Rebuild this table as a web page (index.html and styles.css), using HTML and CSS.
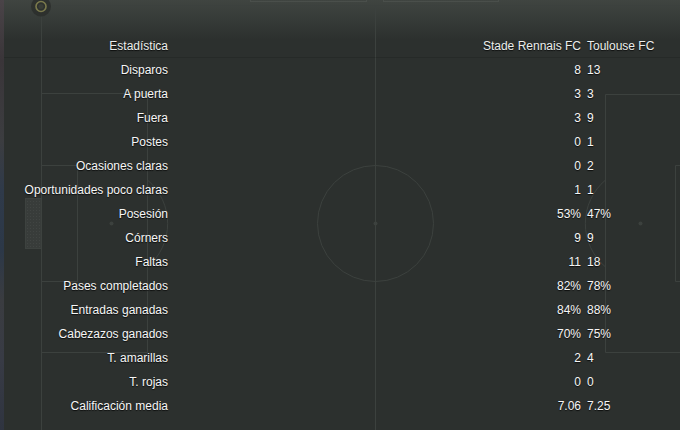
FILE: index.html
```html
<!DOCTYPE html>
<html lang="es">
<head>
<meta charset="utf-8">
<title>Estadísticas</title>
<link rel="stylesheet" href="styles.css">
</head>
<body>
<div class="screen">
  <div class="edge"></div>
  <svg class="pitch" viewBox="0 0 680 430" width="680" height="430" aria-hidden="true">
    <defs>
      <linearGradient id="topfade" x1="0" y1="0" x2="0" y2="1">
        <stop offset="0" stop-color="#404541"/>
        <stop offset="1" stop-color="#2c302e"/>
      </linearGradient>
      <pattern id="net" width="3" height="3" patternUnits="userSpaceOnUse">
        <rect width="3" height="3" fill="#383c3a"/>
        <rect width="1" height="1" fill="#414543"/>
      </pattern>
    </defs>
    <rect x="0" y="0" width="680" height="40" fill="url(#topfade)"/>
    <g fill="none" stroke="#4a4f4b" stroke-width="1">
      <rect x="250.5" y="-10" width="116" height="11.5"/>
      <rect x="383.5" y="-10" width="115" height="11.5"/>
    </g>
    <g fill="none" stroke="#3c413e" stroke-width="1">
      <path d="M52 5.5 H680"/>
      <path d="M41.5 16 V430"/>
      <path d="M375.5 5 V430"/>
      <circle cx="375.5" cy="223.5" r="58"/>
      <path d="M41.5 93.5 H147.5 V352.5 H41.5"/>
      <path d="M41.5 165.5 H77.5 V281.5 H41.5"/>
      <path d="M147.5 180 A57 57 0 0 1 147.5 267"/>
      <path d="M680 94.5 H605.5 V352.5 H680"/>
      <path d="M680 165.5 H675.5 V281.5 H680"/>
      <path d="M605.5 180 A57 57 0 0 0 605.5 267"/>
    </g>
    <g fill="#3c413e">
      <circle cx="375.5" cy="223.5" r="2"/>
      <circle cx="111.5" cy="223.5" r="2"/>
      <circle cx="640.5" cy="223.5" r="2"/>
    </g>
    <rect x="25.5" y="198.5" width="16" height="50" fill="url(#net)" stroke="#3d423f"/>
    <circle cx="41" cy="6.5" r="10" fill="#2a2d2b" opacity="0.8"/>
    <circle cx="41" cy="6.5" r="5" fill="none" stroke="#7b7a4c" stroke-width="1.6"/>
    <circle cx="41" cy="6.5" r="2.5" fill="#3a3d36"/>
  </svg>

  <div class="stats">
    <div class="row head">
      <span class="label">Estadística</span><span></span>
      <span class="home">Stade Rennais FC</span><span class="away">Toulouse FC</span>
    </div>
    <div class="row"><span class="label">Disparos</span><span></span><span class="home">8</span><span class="away">13</span></div>
    <div class="row"><span class="label">A puerta</span><span></span><span class="home">3</span><span class="away">3</span></div>
    <div class="row"><span class="label">Fuera</span><span></span><span class="home">3</span><span class="away">9</span></div>
    <div class="row"><span class="label">Postes</span><span></span><span class="home">0</span><span class="away">1</span></div>
    <div class="row"><span class="label">Ocasiones claras</span><span></span><span class="home">0</span><span class="away">2</span></div>
    <div class="row"><span class="label">Oportunidades poco claras</span><span></span><span class="home">1</span><span class="away">1</span></div>
    <div class="row"><span class="label">Posesión</span><span></span><span class="home">53%</span><span class="away">47%</span></div>
    <div class="row"><span class="label">Córners</span><span></span><span class="home">9</span><span class="away">9</span></div>
    <div class="row"><span class="label">Faltas</span><span></span><span class="home">11</span><span class="away">18</span></div>
    <div class="row"><span class="label">Pases completados</span><span></span><span class="home">82%</span><span class="away">78%</span></div>
    <div class="row"><span class="label">Entradas ganadas</span><span></span><span class="home">84%</span><span class="away">88%</span></div>
    <div class="row"><span class="label">Cabezazos ganados</span><span></span><span class="home">70%</span><span class="away">75%</span></div>
    <div class="row"><span class="label">T. amarillas</span><span></span><span class="home">2</span><span class="away">4</span></div>
    <div class="row"><span class="label">T. rojas</span><span></span><span class="home">0</span><span class="away">0</span></div>
    <div class="row"><span class="label">Calificación media</span><span></span><span class="home">7.06</span><span class="away">7.25</span></div>
  </div>
</div>
</body>
</html>
```

FILE: styles.css
```css
* { box-sizing: border-box; }

html, body {
  margin: 0;
  padding: 0;
  background: #2c302e;
}

.screen {
  position: relative;
  width: 680px;
  height: 430px;
  overflow: hidden;
  background: #2c302e;
  font-family: "Liberation Sans", Arial, sans-serif;
  font-size: 12px;
  color: #f6f6f6;
}

.pitch {
  position: absolute;
  left: 0;
  top: 0;
}

.edge {
  position: absolute;
  left: 0;
  top: 0;
  width: 4px;
  height: 430px;
  z-index: 1;
  background: linear-gradient(to bottom,
    #4a4448 0, #3a3539 60px, #3c3d40 140px, #2f3a4a 190px,
    #2c3848 250px, #3a3c40 300px, #383b45 360px, #2f3440 430px);
}

.stats {
  position: relative;
  padding-top: 34px;
}

.row {
  display: grid;
  grid-template-columns: 168px 293px 120px 80px;
  height: 24px;
  align-items: center;
  line-height: 14px;
  text-shadow: 0 1px 1px rgba(0, 0, 0, 0.75);
}

.head {
  border-bottom: 1px solid rgba(0, 0, 0, 0.12);
  color: #eceeec;
}

.label {
  text-align: right;
  white-space: nowrap;
}

.home {
  text-align: right;
  white-space: nowrap;
}

.away {
  padding-left: 6px;
  white-space: nowrap;
}
```
